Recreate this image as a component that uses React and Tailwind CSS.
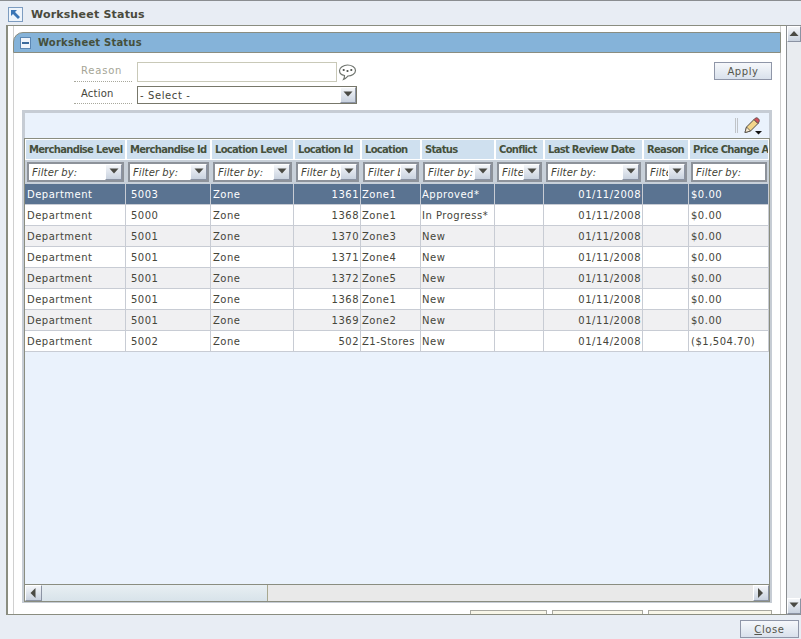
const cols = [
  { name: "Merchandise Level", filter: "Filter by:" },
  { name: "Merchandise Id", filter: "Filter by:" },
  { name: "Location Level", filter: "Filter by:" },
  { name: "Location Id", filter: "Filter by:" },
  { name: "Location", filter: "Filter by:" },
  { name: "Status", filter: "Filter by:" },
  { name: "Conflict", filter: "Filter by:" },
  { name: "Last Review Date", filter: "Filter by:" },
  { name: "Reason", filter: "Filter by:" },
  { name: "Price Change Amount", filter: "Filter by:", noArrow: true },
];

const rows = [
  ["Department", "5003", "Zone", "1361", "Zone1", "Approved*", "", "01/11/2008", "", "$0.00"],
  ["Department", "5000", "Zone", "1368", "Zone1", "In Progress*", "", "01/11/2008", "", "$0.00"],
  ["Department", "5001", "Zone", "1370", "Zone3", "New", "", "01/11/2008", "", "$0.00"],
  ["Department", "5001", "Zone", "1371", "Zone4", "New", "", "01/11/2008", "", "$0.00"],
  ["Department", "5001", "Zone", "1372", "Zone5", "New", "", "01/11/2008", "", "$0.00"],
  ["Department", "5001", "Zone", "1368", "Zone1", "New", "", "01/11/2008", "", "$0.00"],
  ["Department", "5001", "Zone", "1369", "Zone2", "New", "", "01/11/2008", "", "$0.00"],
  ["Department", "5002", "Zone", "502", "Z1-Stores", "New", "", "01/14/2008", "", "($1,504.70)"],
];

const gridCols = "grid grid-cols-[101px_85px_83px_67px_60px_74px_49px_99px_46px_80px] w-[744px]";

function Arrow({ dir = "down" }) {
  const points = { down: "0.5,1.5 9.5,1.5 5,6.5", up: "0.5,7 9.5,7 5,2", left: "6.5,0 6.5,10 1.5,5", right: "2,0 2,10 7,5" };
  return (
    <svg width="10" height="10" viewBox="0 0 10 10" className="block">
      <polygon points={points[dir]} fill="#4a4a44" />
    </svg>
  );
}

function ArrowBtn({ dir, className }) {
  return (
    <div className={`flex items-center justify-center bg-gradient-to-b from-[#f4f6f9] to-[#c9d2df] border border-t-white border-l-white border-r-[#8b93a3] border-b-[#8b93a3] ${className}`}>
      <Arrow dir={dir} />
    </div>
  );
}

function FilterBox({ text, arrow = true }) {
  return (
    <div className="flex h-[20px] border-2 border-[#8d929a] bg-white overflow-hidden w-full">
      <div className="flex-1 min-w-0 h-[16px] overflow-hidden whitespace-nowrap pl-[3px] text-[10px] italic leading-[18px] tracking-[0.1px] text-[#3f3f36]">{text}</div>
      {arrow && <ArrowBtn dir="down" className="w-[17px] h-[16px] shrink-0" />}
    </div>
  );
}

export default function App() {
  return (
    <div className="w-[801px] h-[639px] overflow-hidden flex flex-col bg-[#e8edf4] font-['DejaVu_Sans','Liberation_Sans',sans-serif] text-[10px] text-[#45453a]">
      {/* title bar */}
      <div className="h-[25px] shrink-0 border-t border-[#8a8d90] flex items-center pl-[8px] pt-[2px] gap-[8px]">
        <div className="w-[15px] h-[15px] border border-[#7d9cc0] bg-[#eef4fb] flex items-center justify-center">
          <svg width="11" height="11" viewBox="0 0 11 11">
            <path d="M1 1h6L5 3l5 5-2 2-5-5-2 2z" fill="#3a75b5" />
          </svg>
        </div>
        <span className="pt-[2px] text-[11px] font-bold tracking-[0.2px] text-[#4a4a3c]">Worksheet Status</span>
      </div>

      {/* scrolling body */}
      <div className="h-[590px] shrink-0 flex pl-[6px] overflow-hidden">
        <div className="flex-1 min-w-0 border-l-2 border-t border-b border-[#8a8d80] bg-white pl-[5px] flex flex-col overflow-hidden">
          <div className="flex-1 min-h-0 w-[768px] border-x border-[#d0d0d0] pt-[6px] flex flex-col">
            {/* section header */}
            <div className="h-[21px] shrink-0 -mx-px bg-[#85b3d9] border-t border-b border-x border-[#8a8d80] rounded-tl-[10px] flex items-center pl-[6px] gap-[7px]">
              <div className="w-[11px] h-[12px] bg-[#eef4fb] border border-[#5b87b3] flex items-center justify-center">
                <div className="w-[7px] h-[2px] bg-[#3a6a9c]" />
              </div>
              <span className="text-[10px] font-bold tracking-[0.2px] text-[#45503c]">Worksheet Status</span>
            </div>

            {/* form */}
            <div className="h-[57px] shrink-0 flex pt-[9px]">
              <div className="flex flex-col w-[58px] ml-[60px] mr-[5px] gap-[2px]">
                <div className="h-[20px] border-b border-dotted border-[#a8a89c] pl-[7px] leading-[18px] tracking-[0.8px] text-[#a5a596]">Reason</div>
                <div className="h-[20px] border-b border-dotted border-[#a8a89c] pl-[7px] leading-[20px] tracking-[0.2px] text-[#45453a]">Action</div>
              </div>
              <div className="flex flex-col gap-[4px] w-[220px]">
                <div className="flex items-center h-[20px] gap-[1px]">
                  <div className="w-[200px] h-[20px] border border-[#c9c9b8] bg-white" />
                  <svg width="19" height="17" viewBox="0 0 19 17" className="mt-[1px]">
                    <path d="M9.500 1C13.500 1 17.500 3 17.500 6.500S13.500 12 10 12C9 13 7.500 15 5.500 15.500C6.500 14 6.500 13 6.500 11.500C3.500 11 1.500 9 1.500 6.500S5.500 1 9.500 1z" fill="#fff" stroke="#6f746e" strokeWidth="1.200" />
                    <circle cx="5.700" cy="6" r="1.100" fill="#4a4f4a" />
                    <circle cx="9.500" cy="7" r="1.100" fill="#4a4f4a" />
                    <circle cx="13.300" cy="6" r="1.100" fill="#4a4f4a" />
                  </svg>
                </div>
                <div className="flex h-[18px] w-[220px] border border-[#77776a] bg-white">
                  <div className="flex-1 pl-[2px] leading-[17px] tracking-[0.6px]">- Select -</div>
                  <ArrowBtn dir="down" className="w-[16px] h-[16px]" />
                </div>
              </div>
              <div className="ml-auto mr-[8px]">
                <button className="w-[58px] h-[18px] border border-[#8f96a8] bg-gradient-to-b from-[#f6f8fb] to-[#d9e1ec] text-[10px] leading-[15px] tracking-[0.6px] text-[#55554a]">Apply</button>
              </div>
            </div>

            {/* grid panel */}
            <div className="w-[750px] ml-[8px] h-[493px] shrink-0 border-[3px] border-b border-[#c6ccd4] bg-[#eaf2fc] flex flex-col">
              <div className="h-[25px] shrink-0 flex items-center justify-end pr-[7px] gap-[6px]">
                <div className="w-[3px] h-[15px] border-x border-[#c0c4c8]" />
                <svg width="18" height="18" viewBox="0 0 18 18">
                  <path d="M1 15.500L2.500 10 10 2.500 14 6.500 6.500 14z" fill="#f3d58a" stroke="#4f4a44" strokeWidth="1" />
                  <path d="M10 2.500L11.500 1C12.500 .5 13.500 .8 14.500 1.800S15.500 4 15 5L14 6.500z" fill="#d0505a" stroke="#4f4a44" strokeWidth="0.800" />
                  <path d="M1 15.500L2.500 10 6.500 14z" fill="#f7ead0" stroke="#4f4a44" strokeWidth="0.800" />
                  <path d="M11 14h7l-3.500 3.500z" fill="#111" />
                </svg>
              </div>

              <div className="flex-1 min-h-0 -mx-px flex flex-col border-x border-t border-[#8a8d80]">
                <div className="h-[445px] shrink-0 overflow-hidden">
                  <div className={gridCols}>
                    {cols.map((c) => (
                      <div key={c.name} className="h-[21px] border border-white bg-[#cfe0ef] overflow-hidden whitespace-nowrap pl-[3px] font-bold leading-[19px] tracking-[-0.7px] text-[#45503c]">{c.name}</div>
                    ))}
                  </div>
                  <div className={`${gridCols} bg-[#c8d0d9]`}>
                    {cols.map((c) => (
                      <div key={c.name} className="h-[24px] pl-[2px] pr-[2px] pt-[2px]">
                        <FilterBox text={c.filter} arrow={!c.noArrow} />
                      </div>
                    ))}
                  </div>
                  {rows.map((row, i) => (
                    <div key={i} className={`${gridCols} ${i === 0 ? "bg-[#5a7391] text-white" : i % 2 === 1 ? "bg-white" : "bg-[#f0f0f2]"}`}>
                      {row.map((cell, j) => (
                        <div key={j} className={`h-[21px] border-b border-r border-[#c8ccd4] leading-[22px] tracking-[0.5px] whitespace-nowrap overflow-hidden ${j === 3 || j === 7 ? "text-right pr-[1px]" : j === 1 ? "pl-[5px]" : j === 4 || j === 5 ? "pl-[1px]" : "pl-[2px]"}`}>{cell}</div>
                      ))}
                    </div>
                  ))}
                </div>

                {/* horizontal scrollbar */}
                <div className="h-[18px] shrink-0 flex border-y border-[#8a8d80] bg-[#e9e9e9]">
                  <ArrowBtn dir="left" className="w-[17px]" />
                  <div className="w-[226px] bg-gradient-to-b from-[#e8eff3] to-[#d8e3ea] border-r border-[#a8a890]" />
                  <div className="flex-1" />
                  <ArrowBtn dir="right" className="w-[16px]" />
                </div>
              </div>
            </div>

            {/* buttons cut off by the scroll area */}
            <div className="flex justify-end w-[758px] gap-[5px] pt-[7px]">
              <div className="w-[77px] h-[10px] border border-[#a8a8a0] bg-[#f8f6e8]" />
              <div className="w-[91px] h-[10px] border border-[#a8a8a0] bg-[#f8f6e8]" />
              <div className="w-[124px] h-[10px] border border-[#a8a8a0] bg-[#f8f6e8]" />
            </div>
          </div>
        </div>

        {/* vertical scrollbar */}
        <div className="w-[15px] shrink-0 flex flex-col bg-[#e9ecf0] border-l border-y border-[#8a8d90]">
          <ArrowBtn dir="up" className="h-[16px]" />
          <div className="flex-1" />
          <ArrowBtn dir="down" className="h-[16px]" />
        </div>
      </div>

      {/* footer */}
      <div className="flex-1 flex justify-end items-start pt-[5px] pr-[2px]">
        <button className="w-[59px] h-[18px] border border-[#8f96a8] bg-gradient-to-b from-[#f6f8fb] to-[#d9e1ec] text-[10px] leading-[15px] tracking-[0.6px] text-[#55554a]"><span className="underline">C</span>lose</button>
      </div>
    </div>
  );
}
